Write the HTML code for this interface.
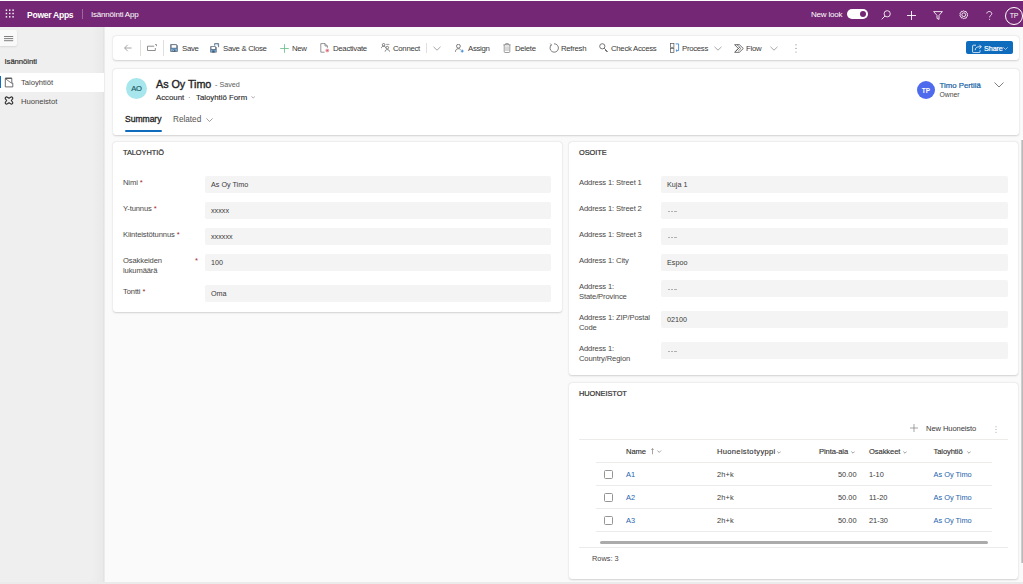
<!DOCTYPE html>
<html><head><meta charset="utf-8">
<style>
*{box-sizing:border-box;margin:0;padding:0}
html,body{width:1023px;height:584px;overflow:hidden;background:#fafafa;font-family:"Liberation Sans",sans-serif;color:#323130;position:relative}
.a{position:absolute;white-space:nowrap}
#top{position:absolute;left:0;top:1px;width:1023px;height:26px;background:#742774}
#topline{position:absolute;left:0;top:0;width:1023px;height:1px;background:#fbfcfb}
#side{position:absolute;left:0;top:27px;width:105px;height:557px;background:linear-gradient(to right,#efefef 0,#efefef 92px,#e9e9e9 103px,#dedede 104px,#fafafa 105px)}
.card{position:absolute;background:#fff;border-radius:3px;box-shadow:0 0.5px 2px rgba(0,0,0,0.16),0 0 1px rgba(0,0,0,0.08)}
.t{font-size:7.8px;letter-spacing:-0.3px;color:#3b3a39}
.inp{position:absolute;background:#f4f4f4;border-radius:2px;height:17px}
.lbl{font-size:7.6px;color:#4a4846;letter-spacing:-0.12px}
.req{color:#a4262c}
.val{font-size:7.2px;color:#323130}
.sep{position:absolute;width:1px;background:#e1dfdd}
</style></head><body>
<div id="topline"></div>
<div id="top">
  <!-- waffle -->
  <svg class="a" style="left:5px;top:8.3px" width="9.5" height="9" viewBox="0 0 10 10" fill="#fff">
    <rect x="0.5" y="0.5" width="1.6" height="1.6"/><rect x="4.2" y="0.5" width="1.6" height="1.6"/><rect x="7.9" y="0.5" width="1.6" height="1.6"/>
    <rect x="0.5" y="4.2" width="1.6" height="1.6"/><rect x="4.2" y="4.2" width="1.6" height="1.6"/><rect x="7.9" y="4.2" width="1.6" height="1.6"/>
    <rect x="0.5" y="7.9" width="1.6" height="1.6"/><rect x="4.2" y="7.9" width="1.6" height="1.6"/><rect x="7.9" y="7.9" width="1.6" height="1.6"/>
  </svg>
  <div class="a" style="left:27px;top:8.5px;font-size:8.6px;font-weight:bold;color:#fff;line-height:10px;letter-spacing:-0.3px">Power Apps</div>
  <div class="a" style="left:82px;top:7.5px;width:1px;height:10.5px;background:rgba(255,255,255,0.3)"></div>
  <div class="a" style="left:91px;top:9px;font-size:8px;color:#fff;line-height:10px;letter-spacing:-0.2px">Isännöinti App</div>
  <div class="a" style="left:811px;top:9px;font-size:8px;color:#fff;line-height:10px;letter-spacing:-0.2px">New look</div>
  <div class="a" style="left:847px;top:8px;width:21px;height:10.2px;border-radius:5.1px;background:#fff"></div>
  <div class="a" style="left:859.8px;top:9.9px;width:6.4px;height:6.4px;border-radius:50%;background:#742774"></div>

  <svg class="a" style="left:880.5px;top:9px" width="10" height="10" viewBox="0 0 10 10" fill="none" stroke="#fff" stroke-width="0.85"><circle cx="6.2" cy="3.8" r="3.1"/><path d="M4 6L0.7 9.3"/></svg>
  <svg class="a" style="left:906.5px;top:9.5px" width="9" height="9" viewBox="0 0 9 9" fill="none" stroke="#fff" stroke-width="0.9"><path d="M4.5 0v9M0 4.5h9"/></svg>
  <svg class="a" style="left:932.5px;top:9.5px" width="10" height="9" viewBox="0 0 10 9" fill="none" stroke="#fff" stroke-width="0.85" stroke-linejoin="round"><path d="M0.6 0.6H9.4L6 4.4V8.4L4 7.4V4.4Z"/></svg>
  <svg class="a" style="left:958.5px;top:9.3px" width="9.5" height="9.5" viewBox="0 0 10 10" fill="none" stroke="#fff" stroke-width="0.9"><circle cx="5" cy="5" r="2"/><path d="M5 0.8l1.1 0.9 1.4-.1.4 1.4 1.2.8-.5 1.3.5 1.3-1.2.8-.4 1.4-1.4-.1L5 9.2l-1.1-.9-1.4.1-.4-1.4-1.2-.8.5-1.3-.5-1.3 1.2-.8.4-1.4 1.4.1z"/></svg>
  <svg class="a" style="left:985.5px;top:9.5px" width="7" height="9" viewBox="0 0 7 9" fill="none" stroke="#fff" stroke-width="0.85"><path d="M0.8 2.5C0.8 1.3 1.9 0.5 3.2 0.5S5.8 1.3 5.8 2.6c0 1.6-2.2 1.9-2.2 3.8"/><circle cx="3.6" cy="8.2" r="0.55" fill="#fff" stroke="none"/></svg>
  <div class="a" style="left:1005px;top:5.5px;width:18px;height:18px;border-radius:50%;border:1px solid #fff"></div>
  <div class="a" style="left:1005px;top:10px;width:18px;text-align:center;font-size:7px;color:#fff;line-height:9px;letter-spacing:-0.2px">TP</div>
</div>
<div id="side">
  <div class="a" style="left:0;top:3.2px;width:17px;height:16px;background:#f9f9f9;border-radius:0 2px 2px 0;box-shadow:0 1px 2px rgba(0,0,0,0.1)"></div>
  <svg class="a" style="left:4px;top:9px" width="9.5" height="6" viewBox="0 0 9.5 6"><path d="M0 0.5H9.2M0 2.6H9.2M0 4.7H9.2" stroke="#6b6a69" stroke-width="0.85"/></svg>
  <div class="a" style="left:4.5px;top:30px;font-size:7.7px;color:#323130;line-height:10px;letter-spacing:-0.05px;-webkit-text-stroke:0.2px #323130">Isännöinti</div>
  <div class="a" style="left:0;top:46px;width:104px;height:19px;background:#fff"></div>
  <div class="a" style="left:0;top:48.5px;width:1.3px;height:12px;background:#0f6cbd"></div>
  <svg class="a" style="left:4px;top:49.5px" width="10" height="11" viewBox="0 0 10 11" fill="none" stroke="#5c5b5a" stroke-width="0.9" stroke-linejoin="round"><path d="M1.3 1.3H7.8V6.2H8.8V9.9H1.3Z"/><path d="M1.5 1.8L7.6 6.2" stroke-width="0.8"/><path d="M1.3 1.3H7.8" stroke-width="1.3"/></svg>
  <div class="a" style="left:21px;top:51px;font-size:7.7px;color:#484644;line-height:10px;letter-spacing:-0.05px">Taloyhtiöt</div>
  <svg class="a" style="left:3.8px;top:68.8px" width="10" height="9" viewBox="0 0 10 9" fill="none" stroke="#2f2e2d" stroke-width="1.1" stroke-linejoin="round"><path d="M1.6 3.2C0.6 1.8 2 0.4 3.4 1.2L5 2.3 6.6 1.2C8 0.4 9.4 1.8 8.4 3.2L7.3 4.5 8.4 5.8C9.4 7.2 8 8.6 6.6 7.8L5 6.7 3.4 7.8C2 8.6 0.6 7.2 1.6 5.8L2.7 4.5Z"/></svg>
  <div class="a" style="left:21px;top:70px;font-size:7.7px;color:#484644;line-height:10px;letter-spacing:-0.05px">Huoneistot</div>
</div>

<div class="card" style="left:113px;top:36px;width:906px;height:24px">
  <svg class="a" style="left:11px;top:8px" width="8" height="8" viewBox="0 0 8 8" fill="none" stroke="#8a8886" stroke-width="0.75"><path d="M7.6 4H0.7M3.7 0.8L0.6 4 3.7 7.2"/></svg>
  <div class="sep" style="left:27px;top:3.5px;height:16.5px"></div>
  <svg class="a" style="left:33.5px;top:8px" width="10" height="7" viewBox="0 0 10 7" fill="none" stroke="#6b6a69" stroke-width="0.75"><path d="M7.2 2.2H0.5v4.3h7.8V4"/><path d="M8 0.6L9.6 0.6 9.6 2.2" stroke-width="0.7"/></svg>
  <div class="sep" style="left:50px;top:3.5px;height:16.5px"></div>
  <svg class="a" style="left:57px;top:8px" width="8" height="8" viewBox="0 0 8 8"><path d="M0.3 0.3H6.4L7.7 1.6V7.7H0.3Z" fill="#495a6f"/><rect x="1.5" y="1.1" width="4.9" height="2.7" fill="#fff"/><rect x="1.1" y="4.5" width="5.8" height="2.5" fill="#78b6e6"/><rect x="2.6" y="5.5" width="2.8" height="2.2" fill="#495a6f"/><rect x="3.2" y="6" width="0.9" height="0.9" fill="#cfd8e3"/></svg>
  <div class="a t" style="top:8px;left:69px;line-height:10px">Save</div>
  <svg class="a" style="left:97px;top:6.5px" width="10" height="10" viewBox="0 0 10 10"><path d="M0.3 3.2H5.4L6.6 4.4V9.6H0.3Z" fill="#495a6f"/><rect x="1.4" y="3.9" width="3.9" height="2.1" fill="#fff"/><rect x="1.1" y="6.6" width="4.7" height="2.3" fill="#78b6e6"/><rect x="2.2" y="7.4" width="2.4" height="2.2" fill="#495a6f"/><path d="M4.6 2.6V0.6H8.6V4.2" fill="none" stroke="#495a6f" stroke-width="0.8"/><rect x="5.4" y="1.3" width="1" height="1" fill="#78b6e6"/><rect x="7" y="1.3" width="1" height="1" fill="#78b6e6"/></svg>
  <div class="a t" style="top:8px;left:110px;line-height:10px">Save &amp; Close</div>
  <svg class="a" style="left:166.5px;top:7.5px" width="9" height="9" viewBox="0 0 9 9" fill="none" stroke="#6cc08c" stroke-width="0.85"><path d="M4.5 0.2v8.6M0.2 4.5h8.6"/></svg>
  <div class="a t" style="top:8px;left:179px;line-height:10px">New</div>
  <svg class="a" style="left:206.5px;top:7px" width="10" height="10" viewBox="0 0 10 10" fill="none" stroke="#737271" stroke-width="0.75"><path d="M4.6 9.2H0.8V0.6H5L7.4 3V4.8"/><path d="M5 0.6V3H7.4"/><circle cx="7.3" cy="7.5" r="2" fill="#e9a0a4" stroke="#fff" stroke-width="0.4"/><path d="M6.5 6.7l1.6 1.6M8.1 6.7L6.5 8.3" stroke="#c4314b" stroke-width="0.5"/></svg>
  <div class="a t" style="top:8px;left:220px;line-height:10px">Deactivate</div>
  <svg class="a" style="left:267.5px;top:7px" width="9" height="9" viewBox="0 0 9 9" fill="none" stroke="#5f5e5d" stroke-width="0.75"><circle cx="2.6" cy="1.8" r="1.3"/><path d="M0.4 5.2c0-1.3 1-2 2.2-2s2.2 0.7 2.2 2"/><circle cx="6.3" cy="4.6" r="1.3"/><path d="M4.1 8.6c0-1.3 1-2 2.2-2s2.2 0.7 2.2 2"/><path d="M5.2 1.4H8.4" stroke-width="0.6"/></svg>
  <div class="a t" style="top:8px;left:280px;line-height:10px">Connect</div>
  <div class="sep" style="left:313px;top:7px;height:10px"></div>
  <svg class="a" style="left:320px;top:10px" width="8" height="5" viewBox="0 0 8 5" fill="none" stroke="#8a8886" stroke-width="0.75"><path d="M0.5 0.8L4 4.2 7.5 0.8"/></svg>
  <svg class="a" style="left:342px;top:7.5px" width="9" height="9" viewBox="0 0 9 9" fill="none" stroke="#5f5e5d" stroke-width="0.8"><circle cx="3.4" cy="2.2" r="1.9"/><path d="M0.4 7.8c0-1.9 1.3-3.1 3-3.1 0.9 0 1.6 0.3 2.1 0.8"/><path d="M7.2 5.6v3M5.7 7.1h3" stroke="#1a73c8" stroke-width="0.8"/></svg>
  <div class="a t" style="top:8px;left:355px;line-height:10px">Assign</div>
  <svg class="a" style="left:389.5px;top:7px" width="8" height="10" viewBox="0 0 8 10" fill="none" stroke="#7a7978" stroke-width="0.75"><path d="M0.4 1.8h7.2M2.7 1.8V0.6h2.6V1.8"/><path d="M1.2 1.8v6.8c0 .5.4.9.9.9h3.8c.5 0 .9-.4.9-.9V1.8"/><path d="M3 3.4v4.6M5 3.4v4.6" stroke-width="0.6"/></svg>
  <div class="a t" style="top:8px;left:402px;line-height:10px">Delete</div>
  <svg class="a" style="left:436px;top:7px" width="10" height="10" viewBox="0 0 10 10" fill="none" stroke="#5f5e5d" stroke-width="0.8"><path d="M2.4 1.9A4.2 4.2 0 1 0 5 0.8"/><path d="M1.2 0.5l1.3 1.4-1.4 1.2" stroke-width="0.7"/></svg>
  <div class="a t" style="top:8px;left:448px;line-height:10px">Refresh</div>
  <svg class="a" style="left:485.5px;top:7px" width="10" height="10" viewBox="0 0 10 10" fill="none" stroke="#5f5e5d" stroke-width="0.85"><circle cx="3.3" cy="3.3" r="2.6"/><path d="M5.2 5.2L8.8 8.8M7 7l-1 1M8 8l-0.9 0.9"/></svg>
  <div class="a t" style="top:8px;left:498px;line-height:10px">Check Access</div>
  <svg class="a" style="left:556.5px;top:7px" width="10" height="10" viewBox="0 0 10 10" fill="none" stroke-width="0.75"><rect x="0.5" y="0.5" width="3.4" height="3.8" stroke="#5f5e5d"/><rect x="0.5" y="5.6" width="3.4" height="3.8" stroke="#5f5e5d"/><path d="M5.6 0.9H8.6V7.6H6.2" stroke="#1a73c8"/><path d="M7 6.5L5.9 7.6 7 8.7" stroke="#1a73c8" stroke-width="0.7"/></svg>
  <div class="a t" style="top:8px;left:569px;line-height:10px">Process</div>
  <svg class="a" style="left:600.5px;top:10px" width="8" height="5" viewBox="0 0 8 5" fill="none" stroke="#8a8886" stroke-width="0.75"><path d="M0.5 0.8L4 4.2 7.5 0.8"/></svg>
  <svg class="a" style="left:621px;top:7.8px" width="10" height="9" viewBox="0 0 10 9" fill="none" stroke="#3f3e3d" stroke-width="0.75" stroke-linejoin="round"><path d="M0.6 0.7H5.4L9.3 4.5 5.4 8.3H0.6L4.4 4.5Z"/><path d="M3 0.7L6.9 4.5 4.2 7.1M1.6 7.2L6 2.9" stroke-width="0.6"/></svg>
  <div class="a t" style="top:8px;left:633px;line-height:10px">Flow</div>
  <svg class="a" style="left:657px;top:10px" width="8" height="5" viewBox="0 0 8 5" fill="none" stroke="#8a8886" stroke-width="0.75"><path d="M0.5 0.8L4 4.2 7.5 0.8"/></svg>
  <svg class="a" style="left:682px;top:7.5px" width="2" height="9" viewBox="0 0 2 9" fill="#8a8886"><circle cx="1" cy="0.8" r="0.6"/><circle cx="1" cy="4.4" r="0.6"/><circle cx="1" cy="8" r="0.6"/></svg>
  <div class="a" style="left:853px;top:5.2px;width:47.3px;height:13px;background:#0f6cbd;border-radius:2px"></div>
  <svg class="a" style="left:858.5px;top:7.5px" width="10" height="9" viewBox="0 0 10 9" fill="none" stroke="#fff" stroke-width="0.8"><path d="M4 1.2H1.4a.8.8 0 0 0-.8.8v5.8a.8.8 0 0 0 .8.8h5.8a.8.8 0 0 0 .8-.8V6.2"/><path d="M3.2 6.2c0-2.4 1.8-3.4 3.8-3.4h2.2M7.4 0.8l1.9 2-1.9 2"/></svg>
  <div class="a" style="left:871px;top:7.5px;font-size:7.3px;color:#fff;line-height:10px;letter-spacing:-0.15px;-webkit-text-stroke:0.2px #fff">Share</div>
  <svg class="a" style="left:890.3px;top:11.3px" width="5" height="3" viewBox="0 0 5 3" fill="none" stroke="#fff" stroke-width="0.6"><path d="M0.3 0.3L2.5 2.5 4.7 0.3"/></svg>
</div>
<div class="card" style="left:113px;top:69px;width:906px;height:66px">
  <div class="a" style="left:13px;top:9px;width:21px;height:21px;border-radius:50%;background:#a7e6ec"></div>
  <div class="a" style="left:13px;top:15px;width:21px;text-align:center;font-size:7.6px;color:#1a5863;line-height:10px;letter-spacing:-0.2px;-webkit-text-stroke:0.15px #1a5863">AO</div>
  <div class="a" style="left:43px;top:8px;font-size:10.8px;color:#242424;line-height:14px;letter-spacing:-0.05px;-webkit-text-stroke:0.35px #242424">As Oy Timo</div>
  <div class="a" style="left:102px;top:11px;font-size:7.2px;color:#605e5c;line-height:10px">- Saved</div>
  <div class="a" style="left:43px;top:23.5px;font-size:7.8px;color:#242424;line-height:10px;-webkit-text-stroke:0.1px #242424">Account</div><div class="a" style="left:75px;top:23.5px;font-size:7.8px;color:#605e5c;line-height:10px">·</div><div class="a" style="left:83px;top:23.5px;font-size:7.8px;color:#242424;line-height:10px;-webkit-text-stroke:0.1px #242424">Taloyhtiö Form</div>
  <svg class="a" style="left:137.5px;top:27.3px" width="4.5" height="2.5" viewBox="0 0 5 3" fill="none" stroke="#605e5c" stroke-width="0.6"><path d="M0.3 0.3L2.5 2.5 4.7 0.3"/></svg>
  <div class="a" style="left:12px;top:45px;font-size:8.6px;color:#242424;line-height:11px;letter-spacing:-0.05px;-webkit-text-stroke:0.3px #242424">Summary</div>
  <div class="a" style="left:12px;top:60.5px;width:37px;height:2px;background:#0f6cbd;border-radius:1px"></div>
  <div class="a" style="left:60px;top:45px;font-size:8.2px;color:#545352;line-height:11px">Related</div>
  <svg class="a" style="left:93px;top:49px" width="7" height="4" viewBox="0 0 7 4" fill="none" stroke="#797775" stroke-width="0.7"><path d="M0.4 0.4L3.5 3.5 6.6 0.4"/></svg>
  <div class="a" style="left:804px;top:12px;width:18px;height:18px;border-radius:50%;background:#4f6bed"></div>
  <div class="a" style="left:804px;top:16.5px;width:18px;text-align:center;font-size:6.5px;color:#fff;line-height:9px;font-weight:bold">TP</div>
  <div class="a" style="left:826.5px;top:11.5px;font-size:7.8px;color:#115ea3;line-height:10px;-webkit-text-stroke:0.2px #115ea3">Timo Pertilä</div>
  <div class="a" style="left:826.5px;top:21px;font-size:6.8px;color:#484644;line-height:9px">Owner</div>
  <svg class="a" style="left:881px;top:13px" width="10" height="6" viewBox="0 0 10 6" fill="none" stroke="#605e5c" stroke-width="0.8"><path d="M0.5 0.5L5 5 9.5 0.5"/></svg>
</div>
<div class="card" style="left:113px;top:142px;width:449px;height:170px"><div class="a" style="left:10px;top:6px;font-size:7.4px;color:#323130;line-height:10px;letter-spacing:-0.05px;-webkit-text-stroke:0.2px #323130">TALOYHTIÖ</div><div class="a lbl" style="left:10px;top:36px;line-height:10px">Nimi <span class="req">*</span></div><div class="inp" style="left:91.5px;top:34px;width:346.5px"><div class="a val" style="left:6.5px;top:4px;line-height:10px;color:#3b3a39">As Oy Timo</div></div><div class="a lbl" style="left:10px;top:62px;line-height:10px">Y-tunnus <span class="req">*</span></div><div class="inp" style="left:91.5px;top:60px;width:346.5px"><div class="a val" style="left:6.5px;top:4px;line-height:10px;color:#3b3a39">xxxxx</div></div><div class="a lbl" style="left:10px;top:88px;line-height:10px">Kiinteistötunnus <span class="req">*</span></div><div class="inp" style="left:91.5px;top:86px;width:346.5px"><div class="a val" style="left:6.5px;top:4px;line-height:10px;color:#3b3a39">xxxxxx</div></div><div class="a lbl" style="left:10px;top:113.5px;line-height:10.6px">Osakkeiden<br>lukumäärä</div><div class="a req" style="left:82px;top:114px;font-size:7.5px;line-height:10px">*</div><div class="inp" style="left:91.5px;top:112px;width:346.5px"><div class="a val" style="left:6.5px;top:4px;line-height:10px;color:#3b3a39">100</div></div><div class="a lbl" style="left:10px;top:145px;line-height:10px">Tontti <span class="req">*</span></div><div class="inp" style="left:91.5px;top:143px;width:346.5px"><div class="a val" style="left:6.5px;top:4px;line-height:10px;color:#3b3a39">Oma</div></div></div><div class="card" style="left:569px;top:142px;width:449px;height:233px"><div class="a" style="left:10px;top:6px;font-size:7.4px;color:#323130;line-height:10px;letter-spacing:-0.05px;-webkit-text-stroke:0.2px #323130">OSOITE</div><div class="a lbl" style="left:10px;top:36px;line-height:10px">Address 1: Street 1</div><div class="inp" style="left:91.5px;top:34px;width:347.5px"><div class="a val" style="left:6.5px;top:4px;line-height:10px;color:#3b3a39">Kuja 1</div></div><div class="a lbl" style="left:10px;top:62px;line-height:10px">Address 1: Street 2</div><div class="inp" style="left:91.5px;top:60px;width:347.5px"><div class="a" style="left:7px;top:9px;width:2.3px;height:1px;background:#b3b1af"></div><div class="a" style="left:10.4px;top:9px;width:2.3px;height:1px;background:#b3b1af"></div><div class="a" style="left:13.8px;top:9px;width:2.3px;height:1px;background:#b3b1af"></div></div><div class="a lbl" style="left:10px;top:88px;line-height:10px">Address 1: Street 3</div><div class="inp" style="left:91.5px;top:86px;width:347.5px"><div class="a" style="left:7px;top:9px;width:2.3px;height:1px;background:#b3b1af"></div><div class="a" style="left:10.4px;top:9px;width:2.3px;height:1px;background:#b3b1af"></div><div class="a" style="left:13.8px;top:9px;width:2.3px;height:1px;background:#b3b1af"></div></div><div class="a lbl" style="left:10px;top:114px;line-height:10px">Address 1: City</div><div class="inp" style="left:91.5px;top:112px;width:347.5px"><div class="a val" style="left:6.5px;top:4px;line-height:10px;color:#3b3a39">Espoo</div></div><div class="a lbl" style="left:10px;top:139.5px;line-height:10.6px">Address 1:<br>State/Province</div><div class="inp" style="left:91.5px;top:138px;width:347.5px"><div class="a" style="left:7px;top:9px;width:2.3px;height:1px;background:#b3b1af"></div><div class="a" style="left:10.4px;top:9px;width:2.3px;height:1px;background:#b3b1af"></div><div class="a" style="left:13.8px;top:9px;width:2.3px;height:1px;background:#b3b1af"></div></div><div class="a lbl" style="left:10px;top:170.5px;line-height:10.6px">Address 1: ZIP/Postal<br>Code</div><div class="inp" style="left:91.5px;top:169px;width:347.5px"><div class="a val" style="left:6.5px;top:4px;line-height:10px;color:#3b3a39">02100</div></div><div class="a lbl" style="left:10px;top:201.5px;line-height:10.6px">Address 1:<br>Country/Region</div><div class="inp" style="left:91.5px;top:200px;width:347.5px"><div class="a" style="left:7px;top:9px;width:2.3px;height:1px;background:#b3b1af"></div><div class="a" style="left:10.4px;top:9px;width:2.3px;height:1px;background:#b3b1af"></div><div class="a" style="left:13.8px;top:9px;width:2.3px;height:1px;background:#b3b1af"></div></div></div>
<div class="card" style="left:569px;top:383px;width:449px;height:195.5px">
  <div class="a" style="left:10px;top:6px;font-size:7.4px;color:#323130;line-height:10px;letter-spacing:-0.05px;-webkit-text-stroke:0.2px #323130">HUONEISTOT</div>
  <svg class="a" style="left:340.5px;top:40.5px" width="8" height="8" viewBox="0 0 8 8" fill="none" stroke="#6b6a69" stroke-width="0.6"><path d="M4 0v8M0 4h8"/></svg>
  <div class="a" style="left:357px;top:40.5px;font-size:7.6px;color:#3b3a39;line-height:10px;letter-spacing:-0.1px">New Huoneisto</div>
  <svg class="a" style="left:425.5px;top:43px" width="2" height="7" viewBox="0 0 2 7" fill="#a19f9d"><circle cx="1" cy="0.8" r="0.55"/><circle cx="1" cy="3.5" r="0.55"/><circle cx="1" cy="6.2" r="0.55"/></svg>
  <div class="a" style="left:10px;top:56px;width:429px;height:1px;background:#edebe9"></div>
  <div class="a" style="left:57px;top:64px;font-size:7.6px;color:#323130;line-height:10px;letter-spacing:-0.1px;-webkit-text-stroke:0.12px #323130">Name</div>
  <svg class="a" style="left:81.5px;top:65px" width="3" height="6.5" viewBox="0 0 3 6.5" fill="none" stroke="#6b6a69" stroke-width="0.6"><path d="M1.5 6.3V0.6M0.3 1.8L1.5 0.6 2.7 1.8"/></svg><svg class="a" style="left:88px;top:66.8px" width="4.5" height="3" viewBox="0 0 4.5 3" fill="none" stroke="#6b6a69" stroke-width="0.6"><path d="M0.4 0.5L2.25 2.4 4.1 0.5"/></svg>
  <div class="a" style="left:148px;top:64px;font-size:7.6px;color:#323130;line-height:10px;letter-spacing:0.3px;-webkit-text-stroke:0.12px #323130">Huoneistotyyppi</div>
  <svg class="a" style="left:207.5px;top:67.5px" width="4" height="3" viewBox="0 0 4 3" fill="none" stroke="#605e5c" stroke-width="0.6"><path d="M0.3 0.5L2 2.2 3.7 0.5"/></svg>
  <div class="a" style="left:250px;top:64px;font-size:7.6px;color:#323130;line-height:10px;letter-spacing:-0.1px;-webkit-text-stroke:0.12px #323130">Pinta-ala</div>
  <svg class="a" style="left:282px;top:67.5px" width="4" height="3" viewBox="0 0 4 3" fill="none" stroke="#605e5c" stroke-width="0.6"><path d="M0.3 0.5L2 2.2 3.7 0.5"/></svg>
  <div class="a" style="left:300px;top:64px;font-size:7.6px;color:#323130;line-height:10px;letter-spacing:-0.1px;-webkit-text-stroke:0.12px #323130">Osakkeet</div>
  <svg class="a" style="left:334px;top:67.5px" width="4" height="3" viewBox="0 0 4 3" fill="none" stroke="#605e5c" stroke-width="0.6"><path d="M0.3 0.5L2 2.2 3.7 0.5"/></svg>
  <div class="a" style="left:364.5px;top:64px;font-size:7.6px;color:#323130;line-height:10px;letter-spacing:-0.1px;-webkit-text-stroke:0.12px #323130">Taloyhtiö</div>
  <svg class="a" style="left:398px;top:67.5px" width="4" height="3" viewBox="0 0 4 3" fill="none" stroke="#605e5c" stroke-width="0.6"><path d="M0.3 0.5L2 2.2 3.7 0.5"/></svg>
  <div class="a" style="left:27px;top:79px;width:396px;height:1px;background:#edebe9"></div>
  <div class="a" style="left:35px;top:87.0px;width:9px;height:9px;border:1px solid #979593;border-radius:1.5px;background:#fff"></div>
  <div class="a" style="left:57px;top:87px;font-size:7.4px;color:#2563ad;line-height:10px">A1</div>
  <div class="a" style="left:148px;top:87px;font-size:7.4px;color:#3b3a39;line-height:10px;letter-spacing:0.15px">2h+k</div>
  <div class="a" style="left:260px;top:87px;width:27.5px;text-align:right;font-size:7.4px;color:#3b3a39;line-height:10px">50.00</div>
  <div class="a" style="left:300px;top:87px;font-size:7.4px;color:#3b3a39;line-height:10px">1-10</div>
  <div class="a" style="left:364.5px;top:87px;font-size:7.4px;color:#2563ad;line-height:10px">As Oy Timo</div>
  <div class="a" style="left:27px;top:102px;width:396px;height:1px;background:#edebe9"></div>
  <div class="a" style="left:35px;top:110.0px;width:9px;height:9px;border:1px solid #979593;border-radius:1.5px;background:#fff"></div>
  <div class="a" style="left:57px;top:110px;font-size:7.4px;color:#2563ad;line-height:10px">A2</div>
  <div class="a" style="left:148px;top:110px;font-size:7.4px;color:#3b3a39;line-height:10px;letter-spacing:0.15px">2h+k</div>
  <div class="a" style="left:260px;top:110px;width:27.5px;text-align:right;font-size:7.4px;color:#3b3a39;line-height:10px">50.00</div>
  <div class="a" style="left:300px;top:110px;font-size:7.4px;color:#3b3a39;line-height:10px">11-20</div>
  <div class="a" style="left:364.5px;top:110px;font-size:7.4px;color:#2563ad;line-height:10px">As Oy Timo</div>
  <div class="a" style="left:27px;top:125px;width:396px;height:1px;background:#edebe9"></div>
  <div class="a" style="left:35px;top:133.0px;width:9px;height:9px;border:1px solid #979593;border-radius:1.5px;background:#fff"></div>
  <div class="a" style="left:57px;top:133px;font-size:7.4px;color:#2563ad;line-height:10px">A3</div>
  <div class="a" style="left:148px;top:133px;font-size:7.4px;color:#3b3a39;line-height:10px;letter-spacing:0.15px">2h+k</div>
  <div class="a" style="left:260px;top:133px;width:27.5px;text-align:right;font-size:7.4px;color:#3b3a39;line-height:10px">50.00</div>
  <div class="a" style="left:300px;top:133px;font-size:7.4px;color:#3b3a39;line-height:10px">21-30</div>
  <div class="a" style="left:364.5px;top:133px;font-size:7.4px;color:#2563ad;line-height:10px">As Oy Timo</div>
  <div class="a" style="left:27px;top:147.5px;width:396px;height:1px;background:#edebe9"></div>
  <div class="a" style="left:31px;top:157.5px;width:388px;height:3px;background:#ababab;border-radius:1.5px"></div>
  <div class="a" style="left:10px;top:164px;width:429px;height:1px;background:#edebe9"></div>
  <div class="a" style="left:23px;top:170.5px;font-size:7.4px;color:#484644;line-height:10px">Rows: 3</div>
</div>
<div class="a" style="left:1020.5px;top:140px;width:2.5px;height:423px;background:linear-gradient(to right,#e0e0e0,#c4c4c4 40%,#b2b2b2)"></div>
<div class="a" style="left:0;top:582px;width:1023px;height:2px;background:#ebebeb"></div>
</body></html>
